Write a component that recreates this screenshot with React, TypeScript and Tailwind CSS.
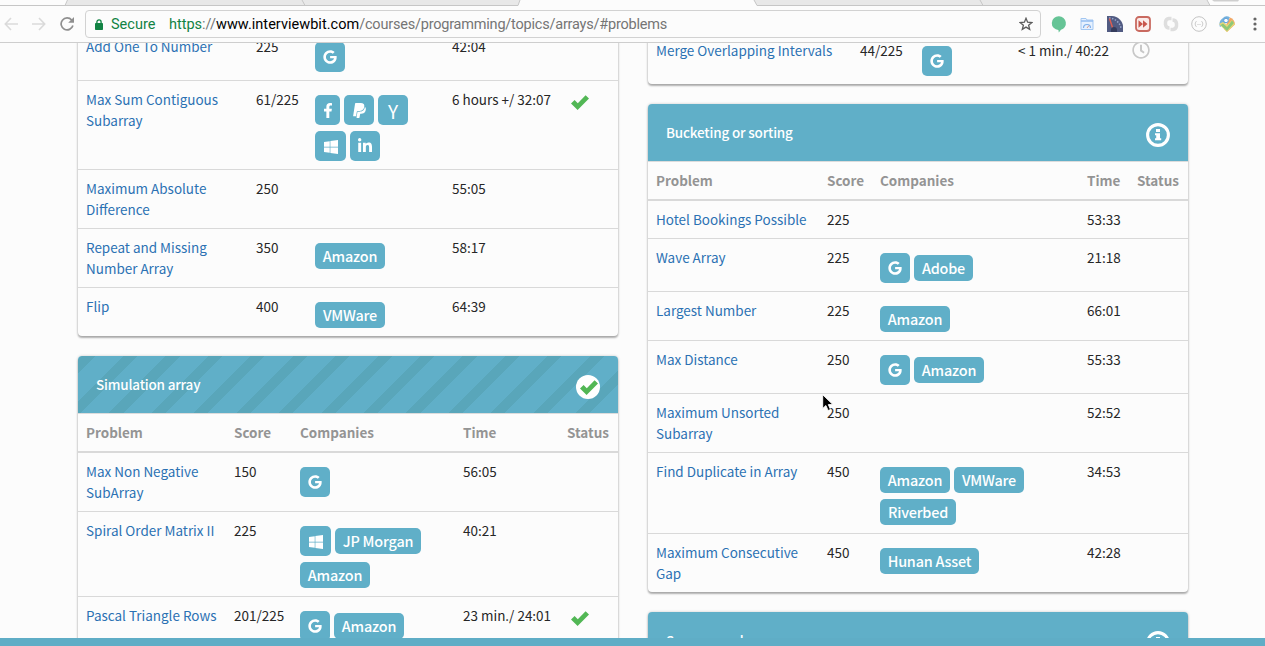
import React from "react";
import { FaFacebookF, FaPaypal, FaWindows, FaLinkedinIn, FaGoogle, FaRegClock } from "react-icons/fa";

type Company = "google" | "facebook" | "paypal" | "y" | "windows" | "linkedin" | "Amazon" | "VMWare" | "Adobe" | "Riverbed" | "Hunan Asset" | "JP Morgan";

type Problem = {
  name: React.ReactNode;
  score: string;
  companies?: Company[];
  time: string;
  status?: "done" | "pending";
};

const badgeBase = "flex items-center justify-center rounded-[5px] bg-[#60afc8] text-white whitespace-nowrap";

const iconBadges: Record<string, { width: string; icon: React.ReactNode }> = {
  google: { width: "w-[30px]", icon: <FaGoogle className="mr-px h-[14px] w-[14px]" /> },
  facebook: { width: "w-[25px]", icon: <FaFacebookF className="h-[15px] w-[10px]" /> },
  paypal: { width: "w-[30px]", icon: <FaPaypal className="h-[17px] w-[15px]" /> },
  y: { width: "w-[30px]", icon: <span className="text-[19px] leading-none">Y</span> },
  windows: { width: "w-[31px]", icon: <FaWindows className="mt-px h-[16px] w-[16px]" /> },
  linkedin: { width: "w-[30px]", icon: <FaLinkedinIn className="h-[16px] w-[16px]" /> },
};

const textWidths: Record<string, string> = {
  Amazon: "w-[70px]",
  VMWare: "w-[70px]",
  Adobe: "w-[59px]",
  Riverbed: "w-[76px]",
  "Hunan Asset": "w-[99px]",
  "JP Morgan": "w-[86px]",
};

function Badge({ company }: { company: Company }) {
  const icon = iconBadges[company];
  if (icon) return <span className={`${badgeBase} h-[30px] ${icon.width}`}>{icon.icon}</span>;
  return (
    <span className={`${badgeBase} h-[26px] pt-px text-[14.4px] font-medium leading-none tracking-[-0.2px] ${textWidths[company]}`}>{company}</span>
  );
}

function Check({ className }: { className: string }) {
  return (
    <svg viewBox="0 0 18 15" className={className} fill="#52b755">
      <path d="M0 8.6 3.6 5l3.2 3.2L14.6.2 18 3.6 6.6 15z" />
    </svg>
  );
}

function Row({ problem, columns, first }: { problem: Problem; columns: string; first?: boolean }) {
  return (
    <div className={`grid ${columns} ${first ? "" : "border-t border-[#d9d9d9]"}`}>
      <div className="p-2 whitespace-nowrap text-[#2b71b3]">{problem.name}</div>
      <div className="py-2 pl-2">{problem.score}</div>
      <div className="px-2">
        {problem.companies && (
          <div className="flex flex-wrap items-center gap-x-1 gap-y-1.5 pt-3.5 pb-2">
            {problem.companies.map((c) => (
              <Badge key={c} company={c} />
            ))}
          </div>
        )}
      </div>
      <div className="py-2 pl-2 whitespace-nowrap">{problem.time}</div>
      <div className="pl-2">
        {problem.status === "done" && <Check className="mt-[14px] ml-1 h-[15px] w-[18px]" />}
        {problem.status === "pending" && <FaRegClock className="mt-[9px] h-[18px] w-[18px] text-[#c8c8c8]" />}
      </div>
    </div>
  );
}

const cardShadow = "shadow-[0_0_3px_rgba(0,0,0,0.2),0_2px_2px_rgba(0,0,0,0.28)]";

function Card({
  title,
  striped,
  columns,
  problems,
}: {
  title?: string;
  striped?: boolean;
  columns: string;
  problems: Problem[];
}) {
  return (
    <section className={`w-[540px] shrink-0 overflow-hidden rounded-[4px] bg-[#fcfcfc] ${cardShadow}`}>
      {title && (
        <>
          <header
            className={`flex h-[57px] items-center justify-between px-[18px] text-white ${
              striped
                ? "bg-[repeating-linear-gradient(-45deg,#60afc8_0px,#60afc8_20px,#59a6ba_20px,#59a6ba_30px)]"
                : "bg-[#60afc8]"
            }`}
          >
            <h2 className="font-medium tracking-[-0.17px]">{title}</h2>
            {striped ? (
              <span className="mt-[5px] flex h-6 w-6 items-center justify-center rounded-full bg-white">
                <Check className="ml-px mt-px h-[15px] w-[18px]" />
              </span>
            ) : (
              <svg viewBox="0 0 24 24" className="mt-[5px] h-6 w-6" fill="white">
                <circle cx="12" cy="12" r="10.4" fill="none" stroke="white" strokeWidth="3.1" />
                <path d="M10 6h4v3h-4zM9 10.3h5v4.9h1.2v2H9v-2h1.2v-3H9z" />
              </svg>
            )}
          </header>
          {problems.length > 0 && (
            <div className={`grid h-10 border-t border-b-2 border-t-[#dcdcdc] border-b-[#d9d9d9] font-bold text-[#949494] ${columns}`}>
              {["Problem", "Score", "Companies", "Time", "Status"].map((h) => (
                <div key={h} className="py-2 pl-2">
                  {h}
                </div>
              ))}
            </div>
          )}
        </>
      )}
      {problems.map((p, i) => (
        <Row key={i} problem={p} columns={columns} first={i === 0 && !!title} />
      ))}
    </section>
  );
}

const two = (a: string, b: string) => (
  <>
    {a}
    <br />
    {b}
  </>
);

const arrayMath: Problem[] = [
  { name: "Add One To Number", score: "225", companies: ["google"], time: "42:04" },
  {
    name: two("Max Sum Contiguous", "Subarray"),
    score: "61/225",
    companies: ["facebook", "paypal", "y", "windows", "linkedin"],
    time: "6 hours +/ 32:07",
    status: "done",
  },
  { name: two("Maximum Absolute", "Difference"), score: "250", time: "55:05" },
  { name: two("Repeat and Missing", "Number Array"), score: "350", companies: ["Amazon"], time: "58:17" },
  { name: "Flip", score: "400", companies: ["VMWare"], time: "64:39" },
];

const simulation: Problem[] = [
  { name: two("Max Non Negative", "SubArray"), score: "150", companies: ["google"], time: "56:05" },
  { name: "Spiral Order Matrix II", score: "225", companies: ["windows", "JP Morgan", "Amazon"], time: "40:21" },
  {
    name: "Pascal Triangle Rows",
    score: "201/225",
    companies: ["google", "Amazon"],
    time: "23 min./ 24:01",
    status: "done",
  },
];

const ranges: Problem[] = [
  { name: "Merge Overlapping Intervals", score: "44/225", companies: ["google"], time: "< 1 min./ 40:22", status: "pending" },
];

const bucketing: Problem[] = [
  { name: "Hotel Bookings Possible", score: "225", time: "53:33" },
  { name: "Wave Array", score: "225", companies: ["google", "Adobe"], time: "21:18" },
  { name: "Largest Number", score: "225", companies: ["Amazon"], time: "66:01" },
  { name: "Max Distance", score: "250", companies: ["google", "Amazon"], time: "55:33" },
  { name: two("Maximum Unsorted", "Subarray"), score: "250", time: "52:52" },
  { name: "Find Duplicate in Array", score: "450", companies: ["Amazon", "VMWare", "Riverbed"], time: "34:53" },
  { name: two("Maximum Consecutive", "Gap"), score: "450", companies: ["Hunan Asset"], time: "42:28" },
];

function Extensions() {
  return (
    <div className="ml-[10px] flex items-center gap-3">
      <svg viewBox="0 0 16 17" className="h-[17px] w-4">
        <path d="M8 .3a6.9 6.9 0 0 1 2 13.5L7.8 16.6l-.4-2.5A6.900 6.900 0 0 1 8 .3z" fill="#66c496" />
      </svg>
      <svg viewBox="0 0 16 16" className="h-4 w-4">
        <path d="M2 2.500h5l1 1.500h6v9.500H2z" fill="#e6f1ff" stroke="#a3c7f2" />
        <path d="M2 5h12" stroke="#93bdf0" strokeWidth="1.500" />
        <path d="M4.500 12a3.500 3.500 0 0 1 7 0" fill="none" stroke="#7fb0ea" strokeWidth="1.200" />
        <path d="m8 12 2-2.500" stroke="#d99a8d" />
      </svg>
      <svg viewBox="0 0 16 16" className="h-4 w-4">
        <path d="M0 0h5c6 0 11 6 11 10v6H0z" fill="#515b82" />
        <path d="M2 2c6 0 11 5 12 10" fill="none" stroke="#9aa7cc" strokeWidth="1.500" strokeDasharray="1.500 1.500" />
        <path d="M2.500 2.500 6 13" stroke="#dc5d50" strokeWidth="1.500" />
        <path d="M4 14a3 3 0 0 1 6 0v2H4z" fill="#353c5c" />
      </svg>
      <svg viewBox="0 0 16 16" className="h-4 w-4">
        <rect x="1" y="1" width="14" height="14" rx="3" fill="#fbecea" stroke="#c96a60" strokeWidth="1.800" />
        <path d="M3.500 4.300 8 8l-4.500 3.700zM8 4.300 12.500 8 8 11.700z" fill="#c9564c" />
      </svg>
      <svg viewBox="0 0 16 16" className="h-4 w-4" fill="none" stroke="#dedede" strokeWidth="3.500">
        <path d="M8.500 2.500H6A4 4 0 0 0 2.500 6v2.500a4 4 0 0 0 4 3.500" />
        <path d="M7.500 13.500H10a4 4 0 0 0 3.500-3.500V7.500a4 4 0 0 0-4-3.500" />
      </svg>
      <svg viewBox="0 0 16 16" className="h-4 w-4" fill="none" stroke="#c4c4c4">
        <circle cx="8" cy="8" r="7.300" />
        <path d="M5.500 5.500c-1.500 0-.5 2-1.700 2.500 1.200.5.200 2.500 1.700 2.500M10.500 5.500c1.500 0 .5 2 1.700 2.500-1.200.5-.2 2.500-1.700 2.500" />
        <path d="M6.500 8.500h3" strokeDasharray="1 1" />
      </svg>
      <svg viewBox="0 0 16 16" className="h-4 w-4">
        <path d="M4 2a5 5 0 0 1 7-.5L8 6 1 11C-.5 7 1 4 4 2z" fill="#75b2de" />
        <path d="M11 1.500c3 1 5 4 5 7L8 16l-3-3z" fill="#f1a765" />
        <path d="M0 8 8 16l8-8-3-4-5 5-4-3z" fill="#ead778" />
        <path d="M1.500 9 4 7.500l4 3.500 5-6.500 2 2.500-7 8z" fill="#8fc878" />
        <circle cx="7" cy="4.500" r="2.300" fill="#f7fbff" stroke="#5c9cd4" />
      </svg>
      <svg viewBox="0 0 4 14" className="ml-[6px] h-[14px] w-1" fill="#666">
        <circle cx="2" cy="2" r="1.600" />
        <circle cx="2" cy="7" r="1.600" />
        <circle cx="2" cy="12" r="1.600" />
      </svg>
    </div>
  );
}

function BrowserBar() {
  return (
    <div className="relative z-10 h-[43px] w-full shrink-0 border-b border-[#cecece] bg-[#fcfcfc]">
      <svg viewBox="0 0 1265 6" className="block h-[6px] w-full">
        <path d="M68 0H520l-2 5.500H65z" fill="#e8e8e8" />
        <path d="M754 0h453l3 5.500H757z" fill="#e8e8e8" />
        <path d="M0 5.500H65l2.500-5.500M302 0l3 5.500M65 5.500h453l2-5.500M754 0l3 5.500h508M980 0l3 5.500M1207 0l3 5.500" fill="none" stroke="#c6c6c6" />
        <path d="M1212 0h27l-1 1.500h-24z" fill="#cfcfcf" />
      </svg>
      <div className="flex h-[36px] items-center">
        <div className="ml-1 flex w-[81px] items-center text-[#dadada]">
          <svg viewBox="0 0 14 14" className="h-[14px] w-[14px]" fill="none" stroke="currentColor" strokeWidth="1.600">
            <path d="M14 7H1.500M7 1 1.300 7 7 13" />
          </svg>
          <svg viewBox="0 0 14 14" className="ml-[14px] h-[14px] w-[14px]" fill="none" stroke="currentColor" strokeWidth="1.600">
            <path d="M0 7h12.500M7 1l5.700 6L7 13" />
          </svg>
          <svg viewBox="0 0 14 14" className="ml-[14px] h-[14px] w-[14px] text-[#8f8f8f]">
            <path d="M11.700 3A6 6 0 1 0 12.900 8.500" fill="none" stroke="currentColor" strokeWidth="1.700" />
            <path d="M14 0v5.800H8.200z" fill="currentColor" />
          </svg>
        </div>
        <div className="flex h-7 w-[956px] items-center rounded-[4px] border border-[#d2d2d2] pr-[7px] pl-[9px] font-[Roboto,sans-serif] text-[14.5px]">
          <svg viewBox="0 0 8 11" className="h-[11px] w-2">
            <rect y="4" width="8" height="7" rx=".8" fill="#128344" />
            <path d="M1.900 4.500V3a2.100 2.100 0 0 1 4.200 0v1.500" fill="none" stroke="#128344" strokeWidth="1.300" />
          </svg>
          <span className="ml-2 w-[58px] text-[#128344]">Secure</span>
          <span className="flex-1 tracking-[-0.21px] text-[#757575]">
            <span className="tracking-[0px]">
              <span className="text-[#128344]">https</span>://
            </span>
            <span className="tracking-[0.03px] text-black">www.interviewbit.com</span>
            /courses/programming/topics/arrays/#problems
          </span>
          <svg viewBox="0 0 14 14" className="h-[14px] w-[14px]" fill="none" stroke="#5c5c5c" strokeWidth="1.300">
            <path d="m7 1.300 1.600 3.900 4.300.3-3.300 2.700 1.100 4.200L7 10.100l-3.700 2.300 1.100-4.200L1.100 5.500l4.300-.3z" />
          </svg>
        </div>
        <Extensions />
      </div>
    </div>
  );
}

export default function App() {
  return (
    <div className="relative flex h-[646px] w-[1265px] flex-col overflow-hidden bg-[#fcfcfc] font-['Noto_Sans_CJK_SC','Noto_Sans',sans-serif] text-[13.48px] leading-[21px] text-[#262626]">
      <BrowserBar />
      <main className="flex min-h-0 flex-1 gap-[30px] overflow-hidden pl-[78px]">
        <div className="-mt-4 flex flex-col gap-5">
          <Card columns="grid-cols-[170px_59px_137px_115px_59px]" problems={arrayMath} />
          <Card title="Simulation array" striped columns="grid-cols-[148px_66px_163px_104px_59px]" problems={simulation} />
        </div>
        <div className="-mt-3 flex flex-col gap-5">
          <Card columns="grid-cols-[204px_62px_96px_114px_64px]" problems={ranges} />
          <Card title="Bucketing or sorting" columns="grid-cols-[171px_53px_207px_50px_59px]" problems={bucketing} />
          <Card title="Space recycle" columns="grid-cols-[171px_53px_207px_50px_59px]" problems={[]} />
        </div>
      </main>
      <div className="h-2 w-full shrink-0 bg-[#5fadc6]" />
      <svg viewBox="0 0 12 18" className="absolute top-[394px] left-[822px] h-[18px] w-3">
        <path d="M.7.700v13.800l3.200-3 2.200 5 2.400-1-2.200-4.900h4.600z" fill="#000" stroke="#fff" strokeWidth=".9" />
      </svg>
    </div>
  );
}
